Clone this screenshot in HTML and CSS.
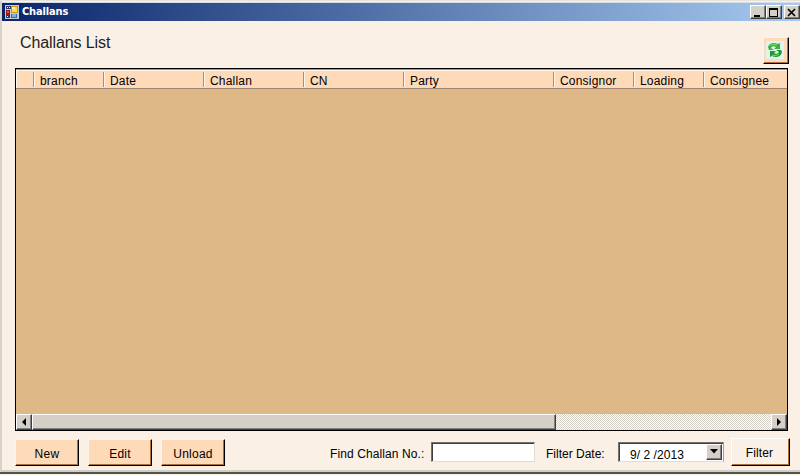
FILE: index.html
```html
<!DOCTYPE html>
<html lang="en">
<head>
<meta charset="utf-8">
<title>Challans</title>
<link rel="stylesheet" href="styles.css">
</head>
<body>
<main class="window">
  <header class="titlebar">
    <svg class="app-icon" width="14" height="14" viewBox="0 0 14 14" shape-rendering="crispEdges">
      <path fill="#c9c9cf" d="M0 0h14v14H0z"/>
      <path fill="#253c78" d="M1 1h5v3H1zM1 10h4v3H1z"/>
      <path fill="#f1f1f1" d="M2 2h1v1H2zM4 2h1v1H4zM2 11h1v1H2z"/>
      <path fill="#9b1710" d="M1 5h4v5H1z"/><path fill="#e8563e" d="M2 6h2v2H2z"/>
      <path fill="#c99518" d="M6 1h7v7H6z"/><path fill="#ffd84c" d="M7 2h5v5H7z"/><path fill="#fff3ad" d="M7 2h3v2H7z"/>
      <path fill="#316bbd" d="M6 9h6v4H6z"/><path fill="#79aeea" d="M7 9h4v3H7z"/>
    </svg>
    <h1 class="caption">Challans</h1>
    <div class="controls">
      <button class="control" aria-label="Minimize"><svg width="13" height="11" shape-rendering="crispEdges"><path d="M3 8h6v2H3z"/></svg></button>
      <button class="control" aria-label="Maximize"><svg width="13" height="11" shape-rendering="crispEdges"><path fill-rule="evenodd" d="M2 1h9v9H2zM3 3v6h7V3z"/></svg></button>
      <button class="control close" aria-label="Close"><svg width="13" height="11"><path d="M3 2l7 7M10 2l-7 7" stroke="#000" stroke-width="1.7"/></svg></button>
    </div>
  </header>
  <div class="content">
    <div class="heading">
      <h2>Challans List</h2>
      <button class="btn refresh" aria-label="Refresh">
        <svg width="18" height="18" viewBox="0 0 18 18">
          <path fill="#e0f3ee" d="M0 0h18v18H0z"/>
          <path fill="#35b43a" d="M2 6c1-4 6-5 10-3l2-1v6H8l2-2C8 5 6 5 5 7l3 2H3z"/>
          <path fill="#1c9a2b" d="M16 11c-1 5-6 6-10 4l-2 1v-6h6l-2 2c2 1 4 1 5-1l-3-2h5z"/>
          <path fill="none" stroke="#86da74" d="M4 5c2-2 4-2 7-1M6 14c3 1 6 0 7-1"/>
        </svg>
      </button>
    </div>
    <section class="grid">
      <div class="head">
        <div class="cell"></div><div class="cell">branch</div><div class="cell">Date</div><div class="cell">Challan</div><div class="cell">CN</div><div class="cell">Party</div><div class="cell">Consignor</div><div class="cell">Loading</div><div class="cell">Consignee</div>
      </div>
      <div class="rows"></div>
      <div class="scrollbar">
        <div class="arrow"><svg width="12" height="12"><path d="M8 2v8L4 6z"/></svg></div>
        <div class="thumb"></div>
        <div class="track"></div>
        <div class="arrow"><svg width="12" height="12"><path d="M4 2v8l4-4z"/></svg></div>
      </div>
    </section>
    <footer class="actions">
      <button class="btn action">New</button>
      <button class="btn action">Edit</button>
      <button class="btn action">Unload</button>
      <label class="find" for="challan">Find Challan No.:</label>
      <input id="challan" class="field" type="text">
      <span class="date-label">Filter Date:</span>
      <div class="date"><span class="value">9/ 2 /2013</span><button class="drop" aria-label="Choose date"><svg width="12" height="12"><path d="M2 3h8L6 7.500z"/></svg></button></div>
      <button class="btn filter">Filter</button>
    </footer>
  </div>
</main>
</body>
</html>
```
FILE: styles.css
```css
* { box-sizing: border-box; }
body { margin: 0; background: #f4f4e6; font: 12px/14px "Liberation Sans", sans-serif; color: #000; }
button { margin: 0; padding: 0; font: inherit; color: inherit; border-radius: 0; }
svg { display: block; flex: none; }

.window {
  width: 800px; height: 474px; padding: 1px 0 0 2px;
  display: flex; flex-direction: column;
  background: #faf0e6;
  border-top: 1px solid #e6e4da;
  border-bottom: 2px solid #55524a;
  box-shadow: inset 2px 0 #d8d2cb, inset 0 -2px #d1cdc7;
}
.titlebar {
  height: 19px; flex: none; display: flex; align-items: center;
  padding: 0 0 0 3px;
  background: linear-gradient(90deg, #0a246a, #a6caf0);
  border-top: 1px solid #d7dce4;
}
.caption { margin: 0 0 0 3px; color: #fff; font: bold 11px/16px "DejaVu Sans Condensed", "DejaVu Sans", sans-serif; letter-spacing: -.15px; }
.controls { margin-left: auto; display: flex; }
.control {
  width: 16px; height: 14px; overflow: hidden;
  background: #d4d0c8; border: 1px solid; border-color: #fff #404040 #404040 #fff;
  box-shadow: inset -1px -1px #808080;
}
.close { margin-left: 2px; }

.content { padding: 0 10px 0 13px; }
.heading { height: 47px; display: flex; justify-content: space-between; }
h2 { margin: 12px 0 0 5px; font: 16px/20px "Liberation Sans", sans-serif; letter-spacing: -.1px; color: #222; }
.btn {
  background: #ffdab9; border: 1px solid; border-color: #fff3e7 #000 #000 #fff3e7;
  box-shadow: inset -1px -1px #ad6f38; letter-spacing: .25px;
}
.refresh { width: 26px; height: 27px; margin: 16px 1px 0 0; padding: 0 2px 1px 0; display: flex; align-items: center; justify-content: center; }

.grid {
  width: 773px; height: 363px; display: flex; flex-direction: column;
  background: #deb887; border: 1px solid #000;
}
.head {
  height: 20px; flex: none; display: grid;
  grid-template-columns: 18px 70px 100px 100px 100px 150px 80px 70px 1fr;
  background: #ffdab9; border-top: 1px solid #a0958b; border-bottom: 1px solid #a08672;
}
.cell { position: relative; padding: 4px 0 0 6px; letter-spacing: .2px; box-shadow: inset 0 1px #fff5eb; white-space: nowrap; }
.cell::before { content: ""; position: absolute; left: -1px; top: 2px; width: 2px; height: 15px; background: linear-gradient(90deg, #a39080 50%, #fff5eb 50%); }
.cell:first-child::before { left: 0; top: 0; width: 1px; height: 18px; background: #fff5eb; }
.rows { flex: 1; }
.scrollbar { height: 16px; flex: none; display: flex; }
.arrow, .thumb, .drop {
  background: #d4d0c8; border: 1px solid; border-color: #fff #404040 #404040 #fff;
  box-shadow: inset -1px -1px #808080;
}
.arrow { width: 16px; display: flex; align-items: center; justify-content: center; }
.thumb { width: 524px; }
.track { flex: 1; background: repeating-conic-gradient(#fff 0 25%, #d4d0c8 0 50%) 0 0 / 2px 2px; }

.actions { display: flex; align-items: flex-start; height: 40px; padding-top: 8px; white-space: nowrap; }
.action { width: 64px; height: 27px; margin-right: 9px; padding-top: 2px; }
.find { margin: 8px 0 0 96px; width: 101px; letter-spacing: .1px; }
.field { width: 104px; height: 20px; margin: 3px 0 0; padding: 0 3px; background: #fff; border: 1px solid; border-color: #77716c #e2dbd3 #e2dbd3 #77716c; box-shadow: inset 1px 1px #404040; border-radius: 0; }
.date-label { margin: 8px 0 0 11px; width: 72px; letter-spacing: 0; }
.date { width: 106px; height: 20px; margin-top: 3px; padding: 1px; display: flex; justify-content: space-between; background: #fff; border: 1px solid; border-color: #77716c #a49f99 #e2dbd3 #77716c; box-shadow: inset 1px 1px #404040; }
.value { padding: 4px 0 0 10px; height: 17px; overflow: hidden; white-space: pre; letter-spacing: .05px; }
.drop { width: 16px; height: 16px; display: flex; justify-content: center; align-items: center; }
.filter { width: 59px; height: 28px; margin: -1px 0 0 7px; background: #faf0e6; border-color: #fff #000 #000 #fff; padding: 1px 2px 0 0; letter-spacing: .1px; }
```
